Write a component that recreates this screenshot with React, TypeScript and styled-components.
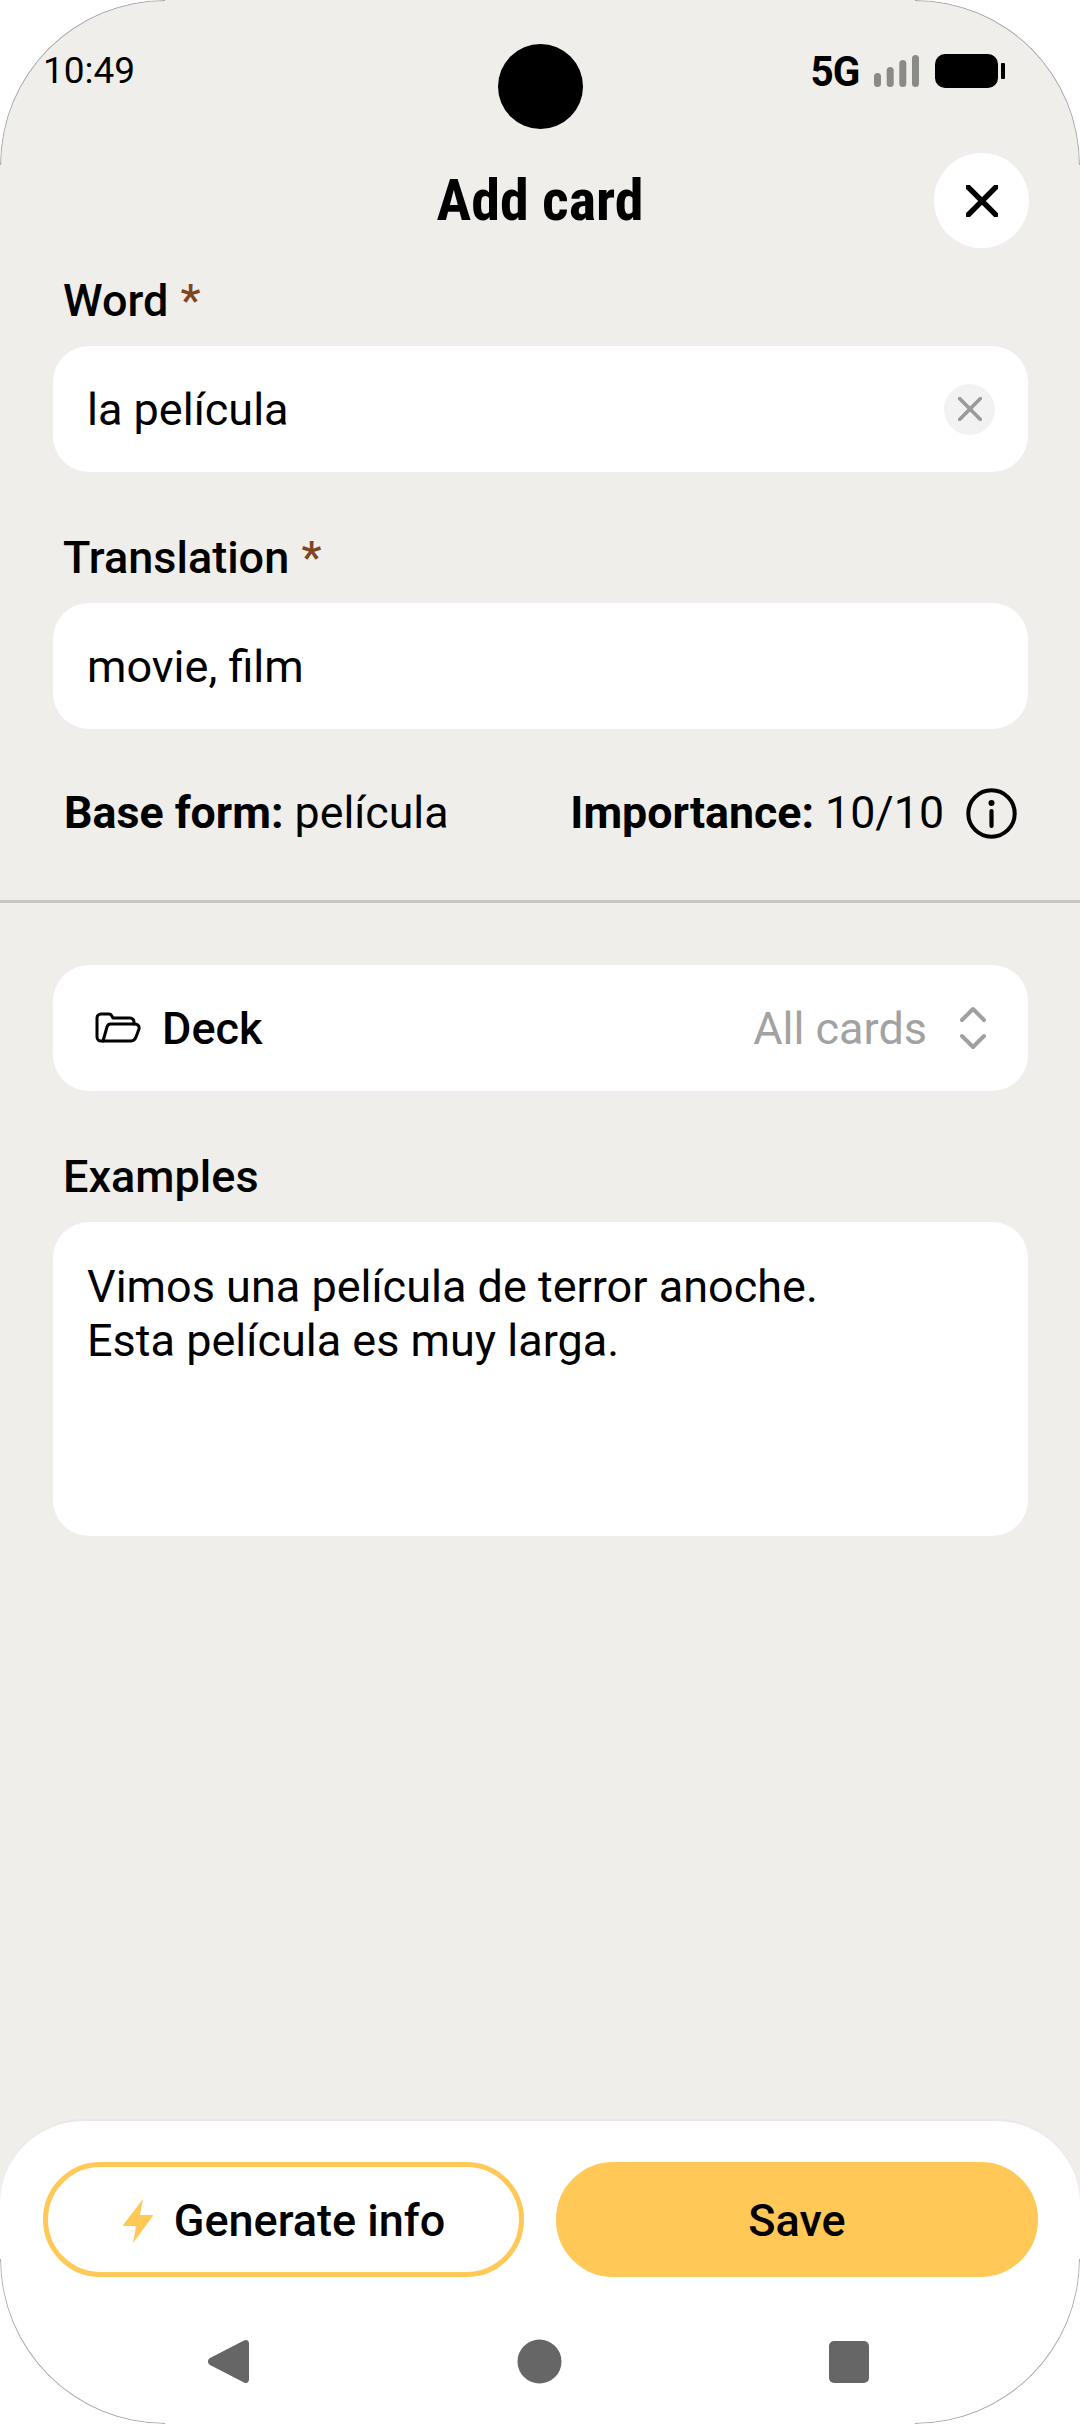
import { createGlobalStyle, styled } from 'styled-components';

const GlobalStyle = createGlobalStyle`
  html, body {
    margin: 0;
    padding: 0;
    background: #ffffff;
  }
  * {
    box-sizing: border-box;
  }
`;

const Screen = styled.div`
  position: relative;
  width: 1080px;
  height: 2424px;
  display: flex;
  flex-direction: column;
  overflow: hidden;
  border-radius: 165px;
  background: #efeeea;
  font-family: Roboto, 'Liberation Sans', sans-serif;
  color: #000;
`;

// hairline of the device outline, only visible on the rounded corners
const Corner = styled.div<{ $x: 'left' | 'right'; $y: 'top' | 'bottom' }>`
  position: absolute;
  ${(p) => p.$x}: 0;
  ${(p) => p.$y}: 0;
  width: 165px;
  height: 165px;
  border-${(p) => p.$x}: 1px solid #a8a8a8;
  border-${(p) => p.$y}: 1px solid #a8a8a8;
  border-${(p) => p.$y}-${(p) => p.$x}-radius: 165px;
  pointer-events: none;
`;

const StatusBar = styled.div`
  height: 128px;
  padding: 44px 42px 0;
  display: grid;
  grid-template-columns: 1fr 85px 1fr;
  align-items: start;
`;

const Time = styled.span`
  font-size: 37px;
  line-height: 54px;
  margin-left: 1px;
`;

const Camera = styled.div`
  width: 85px;
  height: 85px;
  border-radius: 50%;
  background: #000;
`;

const StatusIcons = styled.div`
  display: flex;
  justify-content: flex-end;
  align-items: center;
  height: 44px;
  margin: 5px 31px 0 0;
`;

const Network = styled.span`
  font-size: 43px;
  font-weight: 700;
  letter-spacing: -1px;
  margin-right: 13px;
  transform: scaleX(0.94);
`;

const Battery = styled.svg`
  margin-left: 15px;
`;

const Header = styled.div`
  padding: 25px 51px 0;
  height: 147px;
  display: grid;
  grid-template-columns: 95px 1fr 95px;
  align-items: start;
`;

const Title = styled.h1`
  grid-column: 2;
  margin: 0;
  text-align: center;
  font-size: 58px;
  line-height: 95px;
  font-weight: 700;
  font-stretch: 87%;
`;

const CloseButton = styled.button`
  width: 95px;
  height: 95px;
  border: none;
  border-radius: 50%;
  background: #fff;
  display: flex;
  align-items: center;
  justify-content: center;
  padding: 0;
`;

const Form = styled.div`
  flex: 1;
  display: flex;
  flex-direction: column;
`;

const Section = styled.div`
  padding: 0 52px 0 53px;
  display: flex;
  flex-direction: column;
`;

const Label = styled.label`
  padding-left: 10px;
  font-size: 45px;
  line-height: 52px;
  font-weight: 500;
  margin-top: 60px;
  margin-bottom: 19px;
  &:first-child {
    margin-top: 0;
  }
`;

const Required = styled.span`
  color: #7d4520;
  margin-left: 1px;
`;

const Field = styled.div`
  height: 126px;
  border-radius: 36px;
  background: #fff;
  padding: 0 33px 0 34px;
  display: flex;
  align-items: center;
  justify-content: space-between;
  font-size: 45px;
`;

const ClearButton = styled.span`
  width: 51px;
  height: 51px;
  border-radius: 50%;
  background: #f2f2f2;
  display: flex;
  align-items: center;
  justify-content: center;
`;

const InfoRow = styled.div`
  margin-top: 53px;
  padding: 0 63px 0 64px;
  display: flex;
  align-items: center;
  justify-content: space-between;
  font-size: 44.7px;
  height: 62px;
`;

const InfoGroup = styled.div`
  display: flex;
  align-items: center;
  gap: 22px;
`;

const Strong = styled.b`
  font-weight: 700;
`;

const Divider = styled.hr`
  width: 100%;
  height: 3px;
  margin: 56px 0 62px;
  border: none;
  background: #c6c5c1;
`;

const DeckRow = styled(Field)`
  padding: 0 41px 0 42px;
`;

const DeckName = styled.div`
  display: flex;
  align-items: center;
  gap: 21px;
  font-weight: 500;
  font-size: 45px;
`;

const DeckValue = styled.div`
  display: flex;
  align-items: center;
  gap: 32px;
  color: #a2a2a2;
`;

const TextArea = styled.div`
  height: 314px;
  border-radius: 36px;
  background: #fff;
  padding: 38px 34px;
  font-size: 45px;
  line-height: 54px;
`;

const BottomPanel = styled.div`
  height: 305px;
  border-radius: 84px 84px 0 0;
  border-top: 2px solid #e9e8e4;
  background: #fff;
  padding: 41px 42px 0 43px;
`;

const Buttons = styled.div`
  display: grid;
  grid-template-columns: 481px 482px;
  justify-content: space-between;
  height: 115px;
`;

const Button = styled.button<{ $primary?: boolean }>`
  border-radius: 58px;
  border: 5px solid #ffc857;
  background: ${(p) => (p.$primary ? '#ffc857' : '#fff')};
  color: #000;
  font-family: inherit;
  font-size: 45px;
  font-weight: 500;
  display: flex;
  align-items: center;
  justify-content: center;
  gap: 20px;
  padding: 2px 0 0;
`;

const NavBar = styled.div`
  margin-top: 62px;
  padding: 0 169px 0 165px;
  display: flex;
  align-items: center;
  justify-content: space-between;
`;

function CloseIcon({ size, color, width }: { size: number; color: string; width: number }) {
  return (
    <svg width={size} height={size} viewBox="0 0 30 30" fill="none">
      <path d="M2 2 28 28M28 2 2 28" stroke={color} strokeWidth={width} strokeLinecap="round" />
    </svg>
  );
}

export default function App() {
  return (
    <>
      <GlobalStyle />
      <Screen>
        <StatusBar>
          <Time>10:49</Time>
          <Camera />
          <StatusIcons>
            <Network>5G</Network>
            <svg width="46" height="32" viewBox="0 0 46 32" fill="#8a8a87">
              <rect x="0" y="18" width="7" height="14" rx="3.5" />
              <rect x="12.7" y="12" width="7" height="20" rx="3.5" />
              <rect x="25.3" y="5" width="7" height="27" rx="3.5" />
              <rect x="38" y="0" width="7" height="32" rx="3.5" />
            </svg>
            <Battery width="72" height="34" viewBox="0 0 72 34">
              <rect x="0" y="0" width="63" height="34" rx="10" fill="#000" />
              <rect x="66" y="9" width="4" height="16" rx="1" fill="#000" />
            </Battery>
          </StatusIcons>
        </StatusBar>

        <Header>
          <Title>Add card</Title>
          <CloseButton>
            <CloseIcon size={32} color="#000" width={5.2} />
          </CloseButton>
        </Header>

        <Form>
          <Section>
            <Label>
              Word <Required>*</Required>
            </Label>
            <Field>
              la película
              <ClearButton>
                <CloseIcon size={24} color="#9a9a9a" width={4.5} />
              </ClearButton>
            </Field>
            <Label>
              Translation <Required>*</Required>
            </Label>
            <Field>movie, film</Field>
          </Section>

          <InfoRow>
            <span>
              <Strong>Base form:</Strong> película
            </span>
            <InfoGroup>
              <span>
                <Strong>Importance:</Strong> 10/10
              </span>
              <svg width="51" height="51" viewBox="0 0 51 51" fill="none">
                <circle cx="25.5" cy="25.5" r="23.2" stroke="#000" strokeWidth="4" />
                <circle cx="25.5" cy="15" r="3" fill="#000" />
                <path d="M25.5 23V38" stroke="#000" strokeWidth="4.2" strokeLinecap="round" />
              </svg>
            </InfoGroup>
          </InfoRow>

          <Divider />

          <Section>
            <DeckRow>
              <DeckName>
                <svg width="46" height="32" viewBox="0 0 46 32" fill="none">
                  <path
                    d="M8 29H6a4 4 0 0 1-4-4V6a4 4 0 0 1 4-4h8a3 3 0 0 1 2.5 1.5L18 6h17a4 4 0 0 1 4 4v2"
                    stroke="#000"
                    strokeWidth="3"
                    strokeLinecap="round"
                    strokeLinejoin="round"
                  />
                  <path
                    d="M8 29l4-14a4 4 0 0 1 4-3h24a4 4 0 0 1 4 5l-3 8a6 6 0 0 1-5 4Z"
                    stroke="#000"
                    strokeWidth="3"
                    strokeLinejoin="round"
                  />
                </svg>
                Deck
              </DeckName>
              <DeckValue>
                All cards
                <svg width="28" height="44" viewBox="0 0 28 44" fill="none">
                  <path
                    d="M3 14 14 3 25 14M3 30 14 41 25 30"
                    stroke="#a0a0a0"
                    strokeWidth="4"
                    strokeLinecap="round"
                    strokeLinejoin="round"
                  />
                </svg>
              </DeckValue>
            </DeckRow>

            <Label>Examples</Label>
            <TextArea>
              Vimos una película de terror anoche.
              <br />
              Esta película es muy larga.
            </TextArea>
          </Section>
        </Form>

        <BottomPanel>
          <Buttons>
            <Button>
              <svg width="32" height="44" viewBox="0 0 32 44" fill="#ffc857">
                <path d="M21 0 1 26a1 1 0 0 0 1 1h12l-3 17L31 17a1 1 0 0 0-1-1H18Z" />
              </svg>
              Generate info
            </Button>
            <Button $primary>Save</Button>
          </Buttons>
          <NavBar>
            <svg width="42" height="45" viewBox="0 0 42 45" fill="#666">
              <path d="M36 1.5 2 19a4 4 0 0 0 0 7l34 17.500c3 1.5 5-.5 5-3V4.5c0-2.500-2-4.500-5-3Z" />
            </svg>
            <svg width="45" height="45" viewBox="0 0 45 45" fill="#666">
              <circle cx="22.5" cy="22.5" r="22" />
            </svg>
            <svg width="40" height="42" viewBox="0 0 40 42" fill="#666">
              <rect x="0" y="0" width="40" height="42" rx="5" />
            </svg>
          </NavBar>
        </BottomPanel>

        <Corner $x="left" $y="top" />
        <Corner $x="right" $y="top" />
        <Corner $x="left" $y="bottom" />
        <Corner $x="right" $y="bottom" />
      </Screen>
    </>
  );
}
